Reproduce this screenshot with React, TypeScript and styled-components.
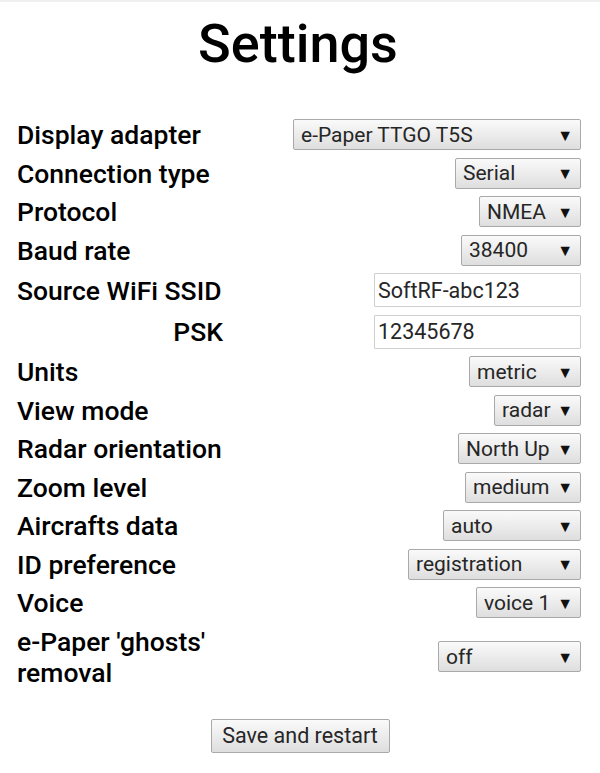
import React from "react";
import styled, { createGlobalStyle } from "styled-components";

const Global = createGlobalStyle`
  html, body { margin: 0; padding: 0; background: #fff; }
  body {
    font-family: Roboto, "Noto Sans", Arial, sans-serif;
    color: #000;
    border-top: 2px solid #efefef;
  }
`;

const Page = styled.div`
  padding: 10px 19px 20px 15px;
`;

const Title = styled.h1`
  margin: 0 0 44px;
  text-align: center;
  font-size: 54px;
  font-weight: 500;
  line-height: 63px;
`;

const Form = styled.form`
  display: flex;
  flex-direction: column;
  gap: 7.5px;
`;

const Row = styled.div`
  display: grid;
  grid-template-columns: 208px 1fr;
  align-items: center;
`;

const Label = styled.label<{ $right?: boolean; $wrap?: boolean }>`
  font-size: 26.5px;
  font-weight: 500;
  line-height: 31px;
  white-space: ${(p) => (p.$wrap ? "normal" : "nowrap")};
  text-align: ${(p) => (p.$right ? "right" : "left")};
  padding-left: 2px;
`;

const Control = styled.div`
  justify-self: end;
`;

const SelectWrap = styled.div<{ $w: number }>`
  position: relative;
  width: ${(p) => p.$w}px;
  &::after {
    content: "▼";
    position: absolute;
    right: 8px;
    top: 50%;
    transform: translateY(-50%);
    font-size: 16px;
    color: #111;
    pointer-events: none;
  }
`;

const Select = styled.select`
  appearance: none;
  -webkit-appearance: none;
  display: block;
  width: 100%;
  height: 31px;
  box-sizing: border-box;
  margin: 0;
  padding: 0 26px 0 7px;
  font-family: Roboto, "Noto Sans", Arial, sans-serif;
  font-size: 21px;
  color: #262626;
  border: 1px solid #a9a9a9;
  border-radius: 2px;
  background: linear-gradient(#fafafa, #dedede);
`;

const Input = styled.input`
  display: block;
  width: 207px;
  height: 34px;
  box-sizing: border-box;
  margin: 0;
  padding: 0 3px;
  font-family: Roboto, "Noto Sans", Arial, sans-serif;
  font-size: 21.5px;
  color: #262626;
  border: 1px solid #cfcfcf;
  border-radius: 1px;
  background: #fff;
`;

const Actions = styled.div`
  display: flex;
  justify-content: center;
  padding-top: 31px;
  padding-left: 4px;
`;

const Button = styled.button`
  height: 34px;
  width: 179px;
  padding: 0;
  font-family: Roboto, "Noto Sans", Arial, sans-serif;
  font-size: 21.5px;
  color: #262626;
  border: 1px solid #a9a9a9;
  border-radius: 2px;
  background: linear-gradient(#fafafa, #dedede);
`;

type SelRow = { label: string; value: string; w: number };

const Sel = ({ value, w }: { value: string; w: number }) => (
  <SelectWrap $w={w}>
    <Select defaultValue={value}>
      <option value={value}>{value}</option>
    </Select>
  </SelectWrap>
);

const top: SelRow[] = [
  { label: "Display adapter", value: "e-Paper TTGO T5S", w: 288 },
  { label: "Connection type", value: "Serial", w: 126 },
  { label: "Protocol", value: "NMEA", w: 102 },
  { label: "Baud rate", value: "38400", w: 120 },
];

const bottom: SelRow[] = [
  { label: "Units", value: "metric", w: 112 },
  { label: "View mode", value: "radar", w: 87 },
  { label: "Radar orientation", value: "North Up", w: 123 },
  { label: "Zoom level", value: "medium", w: 116 },
  { label: "Aircrafts data", value: "auto", w: 138 },
  { label: "ID preference", value: "registration", w: 173 },
  { label: "Voice", value: "voice 1", w: 105 },
];

export default function App() {
  return (
    <>
      <Global />
      <Page>
        <Title>Settings</Title>
        <Form onSubmit={(e) => e.preventDefault()}>
          {top.map((r) => (
            <Row key={r.label}>
              <Label>{r.label}</Label>
              <Control>
                <Sel value={r.value} w={r.w} />
              </Control>
            </Row>
          ))}
          <Row>
            <Label>Source WiFi SSID</Label>
            <Control>
              <Input defaultValue="SoftRF-abc123" />
            </Control>
          </Row>
          <Row>
            <Label $right>PSK</Label>
            <Control>
              <Input defaultValue="12345678" />
            </Control>
          </Row>
          {bottom.map((r) => (
            <Row key={r.label}>
              <Label>{r.label}</Label>
              <Control>
                <Sel value={r.value} w={r.w} />
              </Control>
            </Row>
          ))}
          <Row>
            <Label $wrap>e-Paper 'ghosts' removal</Label>
            <Control>
              <Sel value="off" w={143} />
            </Control>
          </Row>
        </Form>
        <Actions>
          <Button type="button">Save and restart</Button>
        </Actions>
      </Page>
    </>
  );
}
